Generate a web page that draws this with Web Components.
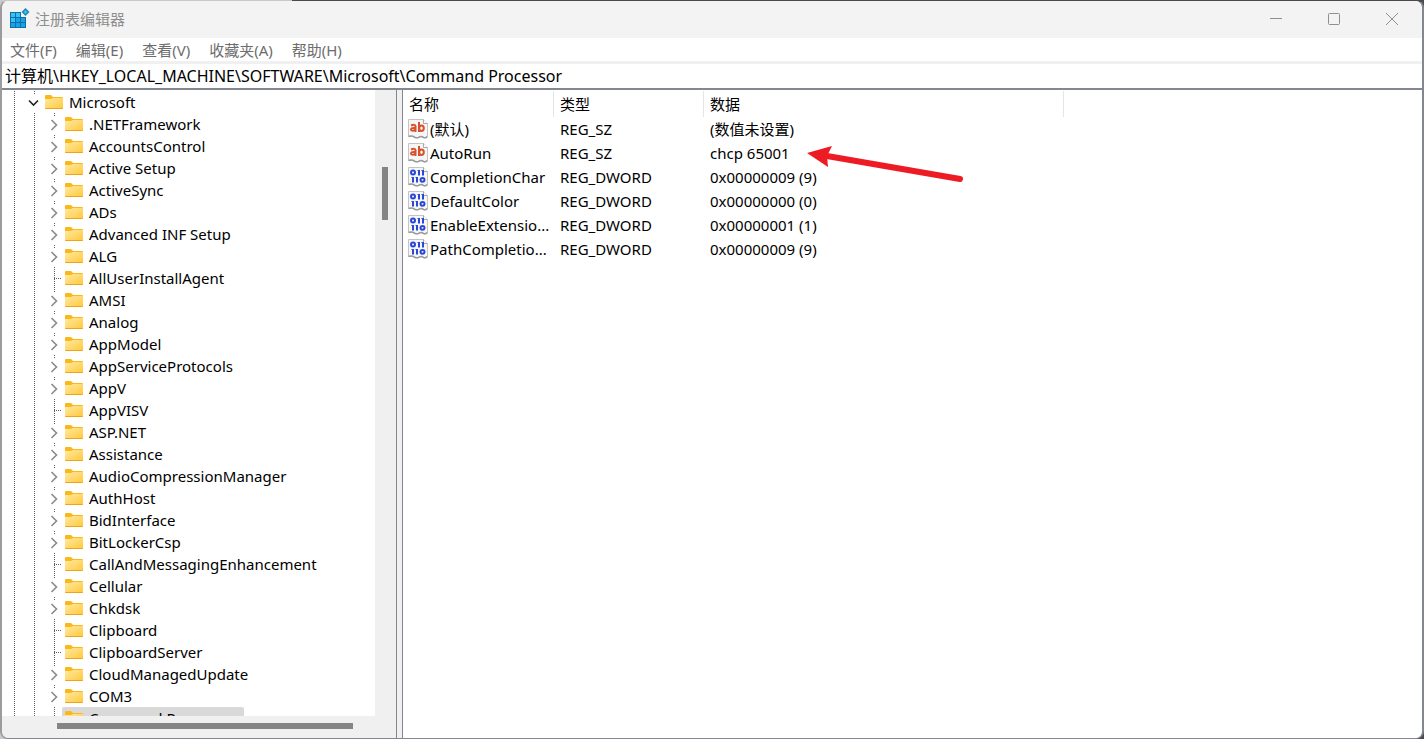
<!DOCTYPE html>
<html lang="zh-CN">
<head>
<meta charset="utf-8">
<title>注册表编辑器</title>
<style>
html,body{margin:0;height:100%}
body{background:linear-gradient(90deg,#c9c9cc 292px,#4a4a4e 292px);font:15px/22px "Noto Sans","Noto Sans CJK SC",sans-serif;color:#000;overflow:hidden}
</style>
</head>
<body>
<reg-window>
  <reg-titlebar slot="title">注册表编辑器</reg-titlebar>
  <reg-menubar slot="menu"></reg-menubar>
  <reg-address slot="address"></reg-address>
  <reg-tree slot="tree"></reg-tree>
  <reg-values slot="values"></reg-values>
</reg-window>
<script>
function define(name, html, setup) {
  customElements.define(name, class extends HTMLElement {
    connectedCallback() {
      if (this.shadowRoot) return;
      const root = this.attachShadow({ mode: 'open' });
      const t = document.createElement('template');
      t.innerHTML = html;
      root.append(t.content.cloneNode(true));
      if (setup) setup(root, this);
    }
  });
}

define('reg-window', `
<style>
:host{display:flex;flex-direction:column;box-sizing:border-box;height:100vh;border:solid #828790;border-top-color:transparent;border-left-color:#9c9c9e;border-width:1px 2px 1px 2px;border-radius:8px;overflow:hidden;background:#f0f0f0 padding-box}
main{display:flex;flex:1;min-height:0;border-top:2px solid #828790}
.left{flex:0 0 394px;border-right:1px solid #828790;display:flex;min-width:0}
.right{flex:1;min-width:0;margin-left:5px;border-left:1px solid #828790;background:#fff}
</style>
<slot name="title"></slot><slot name="menu"></slot><slot name="address"></slot>
<main><div class="left"><slot name="tree"></slot></div><div class="right"><slot name="values"></slot></div></main>`);

define('reg-titlebar', `
<style>
:host{display:flex;align-items:center;box-sizing:border-box;height:37px;background:#f3f3f3;color:#8e8e8e;padding:0 1px 2px 7px}
.name{flex:1;padding-left:5px}
button{border:0;background:none;padding:0;width:58px;height:35px;display:grid;place-items:center}
svg{display:block}
</style>
<svg width="21" height="21" viewBox="0 0 21 21"><rect x="1" y="4" width="16" height="16" fill="#0870ac"/><g fill="#35c1f1"><path d="M2 5h4v4H2zM7 5h4v4H7zM2 10h4v4H2z"/></g><g fill="#1ba1e2"><path d="M7 10h4v4H7zM12 10h4v4h-4zM2 15h4v4H2zM7 15h4v4H7zM12 15h4v4h-4z"/></g><path d="M12 4h5v5h-5z" fill="#f3f3f3"/><path d="M16.500 0l4 4-4 4-4-4z" fill="#1787bd"/><path d="M16.500 2l2 2-2 2-2-2z" fill="#4fb9e0"/></svg>
<span class="name"><slot></slot></span>
<button aria-label="最小化"><svg width="12" height="12"><path d="M0 5.500h12" stroke="#8e8e8e"/></svg></button>
<button aria-label="最大化"><svg width="12" height="12"><rect x=".5" y=".5" width="11" height="11" rx="1" fill="none" stroke="#8e8e8e"/></svg></button>
<button aria-label="关闭"><svg width="12" height="12"><path d="M0 0l12 12M12 0L0 12" stroke="#8e8e8e"/></svg></button>`);

define('reg-menubar', `
<style>
:host{display:flex;gap:19px;height:23px;background:#fff;padding-left:8px;border-bottom:3px solid #f0f0f0}
button{border:0;background:none;padding:0;font:inherit;color:#6d6d6d}
</style>`, root => {
  for (const s of ['文件(F)', '编辑(E)', '查看(V)', '收藏夹(A)', '帮助(H)']) {
    const b = document.createElement('button'); b.textContent = s; root.append(b);
  }
});

define('reg-address', `
<style>
:host{display:block;height:24px;background:#fff}
input{display:block;box-sizing:border-box;width:100%;height:24px;border:0;outline:0;padding:0 3px 2px;font:inherit;font-size:16px;color:#000;background:none}
</style><input aria-label="地址" value="计算机\\HKEY_LOCAL_MACHINE\\SOFTWARE\\Microsoft\\Command Processor">`);

const folder = `<svg class="folder" width="18" height="14" viewBox="0 0 18 14"><defs><linearGradient id="g" x1="0" y1="0" x2="1" y2="1"><stop offset="0" stop-color="#ffe9a6"/><stop offset="1" stop-color="#ffc937"/></linearGradient></defs><path d="M0 1q0-1 1-1h5l2 2h9q1 0 1 1v3H0z" fill="#fbb817"/><path d="M0 4h6l2-1h10v10q0 1-1 1H1q-1 0-1-1z" fill="url(#g)"/><path d="M0 13h18q0 1-1 1H1q-1 0-1-1z" fill="#eba41c"/></svg>`;

define('reg-key', `
<style>
:host{display:flex;align-items:center;height:22px;flex:none;--dots:repeating-linear-gradient(#606060 0 1px,transparent 1px 2px)}
.guide{width:1px;height:22px;margin-right:19px;background:var(--dots);flex:none}
.node{width:16px;height:22px;flex:none;margin-left:-8px}
.label{display:flex;align-items:center;gap:6px;height:22px;white-space:nowrap;padding:0 8px 0 3px}
:host([selected]) .label{background:#d9d9d9;border-radius:2px 2px 0 0}
.node svg{display:block}
.leaf{display:block;width:8px;height:22px;margin-left:8px;background:var(--dots) left/1px 100% no-repeat,repeating-linear-gradient(90deg,#606060 0 1px,transparent 1px 2px) 0 11px/8px 1px no-repeat}
.branch{box-sizing:border-box;width:16px;height:22px;padding-top:2px;display:grid;place-items:center;background:var(--dots) 8px 0/1px 3px no-repeat}
</style>
<span class="lines" style="display:contents"></span><span class="node"></span><span class="label">${folder}<slot></slot></span>`, (root, el) => {
  const depth = +el.getAttribute('depth');
  root.querySelector('.lines').innerHTML = '<i class="guide"></i>'.repeat(depth);
  const kind = el.getAttribute('kind');
  root.querySelector('.node').innerHTML = kind === 'leaf' ? '<i class="leaf"></i>' :
    kind === 'open' ? '<i class="branch"><svg width="12" height="8"><path d="M1 1.500l4.500 4.500 4.500-4.500" fill="none" stroke="#222" stroke-width="1.600"/></svg></i>' :
    '<i class="branch"><svg width="8" height="12"><path d="M1.500 1l5 5-5 5" fill="none" stroke="#8a8a8a" stroke-width="1.600"/></svg></i>';
});

define('reg-tree', `
<style>
:host{display:grid;flex:1;min-width:0;grid-template:minmax(0,1fr) 22px/minmax(0,1fr) 21px;background:#f0f0f0}
.keys{display:flex;flex-direction:column;overflow:hidden;background:#fff;padding:1px 0 0 12px}
.v{padding-left:7px}
.v i{display:block;width:6px;height:53px;margin-top:77px;background:#858585}
.h{grid-column:1/3;display:flex;align-items:center;padding-bottom:2px}
.h i{width:296px;height:6px;margin-left:55px;background:#858585}
</style>
<div class="keys" role="tree"></div><div class="v"><i></i></div><div class="h"><i></i></div>`, root => {
  const keys = root.querySelector('.keys');
  const add = (text, depth, kind) => {
    const k = document.createElement('reg-key');
    k.setAttribute('role', 'treeitem');
    k.setAttribute('depth', depth); k.setAttribute('kind', kind); k.textContent = text;
    keys.append(k); return k;
  };
  add('Microsoft', 1, 'open');
  // A leading dash marks a key without subkeys.
  ['.NETFramework','AccountsControl','Active Setup','ActiveSync','ADs','Advanced INF Setup','ALG','-AllUserInstallAgent','AMSI','Analog','AppModel','AppServiceProtocols','AppV','-AppVISV','ASP.NET','Assistance','AudioCompressionManager','AuthHost','BidInterface','BitLockerCsp','-CallAndMessagingEnhancement','Cellular','Chkdsk','-Clipboard','-ClipboardServer','CloudManagedUpdate','COM3'].forEach(s =>
    add(s.replace(/^-/, ''), 2, s[0] === '-' ? 'leaf' : 'closed'));
  add('Command Processor', 2, 'leaf').setAttribute('selected', '');
});

const page = `<path d="M.5.500h15l4 4v13q-2 2-4 1-2-2-5 0-3 1-5-1-3-1-5 0z" fill="#f6f6f6" stroke="#c4c4c4"/><path d="M15.500.500v4h4" fill="#fff" stroke="#a8a8a8"/><path d="M.5 17.500q3-1 5 0 2 2 5 1 3-2 5 0 2 1 4-1" fill="none" stroke="#9a9a9a" stroke-width="1.500"/>`;
const icons = {
  REG_SZ: `<svg width="20" height="20">${page}<g fill="none" stroke="#d9512c" stroke-width="2"><path d="M3 6.500q4-1.500 4.500.500V13M7.500 9q-4.500-.500-4.500 1.500t4.500.500M11 3v10"/><ellipse cx="13.500" cy="9.300" rx="2.300" ry="2.700"/></g></svg>`,
  REG_DWORD: `<svg width="20" height="20">${page}<g fill="none" stroke="#2a48d8" stroke-width="2"><ellipse cx="5" cy="5.500" rx="2" ry="1.900"/><path d="M11 3v5.500M15 3v5.500M5 10v5.500M9 10v5.500"/><ellipse cx="14.500" cy="12.800" rx="2" ry="1.900"/><path d="M9.500 3.500h2M13.500 3.500h2M3.500 10.500h2M7.500 10.500h2" stroke-width="1"/></g></svg>`
};

define('reg-values', `
<style>
:host{display:block;padding-top:1px;position:relative}
table{border-collapse:separate;border-spacing:0;table-layout:fixed;width:661px}
th{height:26px;padding:0 0 0 6px;text-align:left;font-weight:400;border-right:1px solid #e5e5e5}
td{height:24px;padding:0 0 0 6px;white-space:nowrap}
th,td{box-sizing:border-box}
.n{display:flex;align-items:center;gap:2px}
td:first-child{padding-left:5px}
.c1{width:151px}.c2{width:150px}.c3{width:360px}
svg{display:block;flex:none}
.arrow{position:absolute;left:404px;top:54px}
</style>
<table><colgroup><col class="c1"><col class="c2"><col class="c3"></colgroup><thead><tr><th>名称</th><th>类型</th><th>数据</th></tr></thead><tbody></tbody></table>
<svg class="arrow" width="158" height="40" aria-hidden="true"><path d="M20 12L153 35" stroke="#ed1c24" stroke-width="6" stroke-linecap="round"/><path d="M0 9l25-7-5 10 1 11z" fill="#ed1c24"/></svg>`, root => {
  root.querySelector('tbody').innerHTML = [
    ['(默认)', 'REG_SZ', '(数值未设置)'],
    ['AutoRun', 'REG_SZ', 'chcp 65001'],
    ['CompletionChar', 'REG_DWORD', '0x00000009 (9)'],
    ['DefaultColor', 'REG_DWORD', '0x00000000 (0)'],
    ['EnableExtensio...', 'REG_DWORD', '0x00000001 (1)'],
    ['PathCompletio...', 'REG_DWORD', '0x00000009 (9)']
  ].map(([n, t, d]) => `<tr><td><span class="n">${icons[t]}${n}</span></td><td>${t}</td><td>${d}</td></tr>`).join('');
});
</script>
</body>
</html>
